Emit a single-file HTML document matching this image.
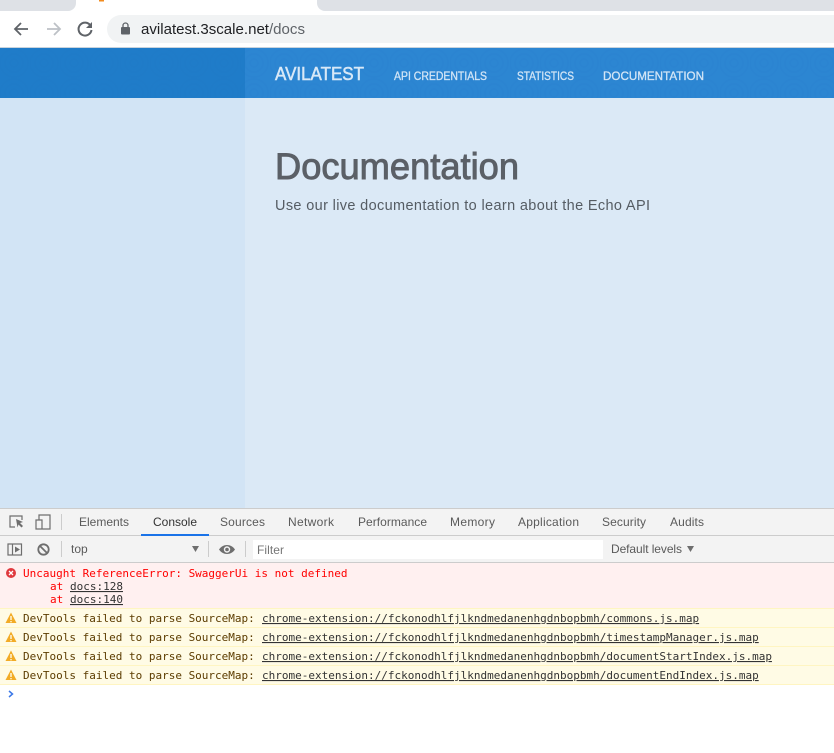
<!DOCTYPE html>
<html lang="en">
<head>
<meta charset="utf-8">
<title>avilatest.3scale.net/docs</title>
<style>
html,body{margin:0;padding:0;width:834px;height:753px;overflow:hidden;background:#fff}
svg{display:block}
.ui{font-family:"Liberation Sans",sans-serif;font-size:12px;fill:#5a5a5a}
.m{font-family:"DejaVu Sans Mono","Liberation Mono",monospace;font-size:11px}
.w{fill:#5c3c00}
.e{fill:#f00}
.l{fill:#333;text-decoration:underline}
.n{font-family:"Liberation Sans",sans-serif;font-size:12px;fill:#d2e5f6;stroke:#d2e5f6;stroke-width:.3px}
</style>
</head>
<body>
<svg width="834" height="753" viewBox="0 0 834 753" xmlns="http://www.w3.org/2000/svg">
<defs>
<pattern id="rings" width="30" height="30" patternUnits="userSpaceOnUse" x="0" y="48">
<g fill="none" stroke="#0f5ea8" stroke-opacity=".035" stroke-width="2">
<circle cx="14" cy="15" r="4"/><circle cx="14" cy="15" r="9"/><circle cx="14" cy="15" r="14"/>
</g>
</pattern>
</defs>

<!-- browser chrome -->
<rect width="834" height="48" fill="#fff"/>
<path d="M0 0H76V3a8 8 0 0 1-8 8H0Z" fill="#dee1e6"/>
<path d="M317 0H834V11H325a8 8 0 0 1-8-8Z" fill="#dee1e6"/>
<rect x="99" y="0" width="5" height="1.500" fill="#f28b1e"/>
<path d="M107 29a14 14 0 0 1 14-14H834V43H121a14 14 0 0 1-14-14Z" fill="#f1f3f4"/>
<path d="M28 29H15M21 23l-6 6 6 6" fill="none" stroke="#5f6368" stroke-width="1.800"/>
<path d="M47 29H60M54 23l6 6-6 6" fill="none" stroke="#bdc1c6" stroke-width="1.800"/>
<path d="M90.500 25.500A6.500 6.500 0 1 0 91.500 30" fill="none" stroke="#5f6368" stroke-width="2"/>
<path d="M92 22v6h-6Z" fill="#5f6368"/>
<rect x="121" y="27" width="9" height="7.500" rx="1" fill="#5f6368"/>
<path d="M123 27.500v-2a2.500 2.500 0 0 1 5 0v2" fill="none" stroke="#5f6368" stroke-width="1.300"/>
<text x="141" y="34" font-family="Liberation Sans,sans-serif" font-size="14.500" fill="#202124" textLength="128" lengthAdjust="spacingAndGlyphs">avilatest.3scale.net</text>
<text x="269" y="34" font-family="Liberation Sans,sans-serif" font-size="14.500" fill="#5f6368" textLength="36" lengthAdjust="spacingAndGlyphs">/docs</text>

<!-- page -->
<rect y="47" width="834" height="1" fill="#c9d3dc"/>
<rect y="48" width="245" height="50" fill="#1f7cc9"/>
<rect x="245" y="48" width="589" height="50" fill="#2c86d2"/>
<rect y="48" width="834" height="50" fill="url(#rings)"/>
<rect y="98" width="245" height="410" fill="#d2e4f5"/>
<rect x="245" y="98" width="589" height="410" fill="#dbe9f6"/>

<text x="275" y="80" font-family="Liberation Sans,sans-serif" font-size="18" fill="#d8e8f7" stroke="#d8e8f7" stroke-width=".5" textLength="89" lengthAdjust="spacingAndGlyphs">AVILATEST</text>
<text class="n" x="394" y="80" textLength="93" lengthAdjust="spacingAndGlyphs">API CREDENTIALS</text>
<text class="n" x="517" y="80" textLength="57" lengthAdjust="spacingAndGlyphs">STATISTICS</text>
<text class="n" x="603" y="80" textLength="101" lengthAdjust="spacingAndGlyphs">DOCUMENTATION</text>

<text x="275" y="179" font-family="Liberation Sans,sans-serif" font-size="37" fill="#5b6067" stroke="#5b6067" stroke-width=".9" textLength="244" lengthAdjust="spacingAndGlyphs">Documentation</text>
<text x="275" y="210" font-family="Liberation Sans,sans-serif" font-size="14.500" fill="#555c63" textLength="375" lengthAdjust="spacing">Use our live documentation to learn about the Echo API</text>

<!-- devtools tab bar -->
<rect y="508" width="834" height="1" fill="#ccc"/>
<rect y="509" width="834" height="26" fill="#f3f3f3"/>
<rect y="535" width="834" height="1" fill="#ccc"/>
<path d="M15 527H10V516H22V520" fill="none" stroke="#6e6e6e" stroke-width="1.200"/>
<path d="M16 519l7 3-3 1 3 3-1.500 1.500-3-3-1 3Z" fill="#6e6e6e"/>
<path d="M39 520V515H50V529H36V520H42V529" fill="none" stroke="#6e6e6e" stroke-width="1.200"/>
<rect x="61" y="514" width="1" height="16" fill="#ccc"/>
<text class="ui" x="79" y="526" textLength="50">Elements</text>
<text class="ui" x="153" y="526" textLength="44" style="fill:#333">Console</text>
<rect x="141" y="534" width="68" height="2" fill="#1a73e8"/>
<text class="ui" x="220" y="526" textLength="45">Sources</text>
<text class="ui" x="288" y="526" textLength="46">Network</text>
<text class="ui" x="358" y="526" textLength="69">Performance</text>
<text class="ui" x="450" y="526" textLength="45">Memory</text>
<text class="ui" x="518" y="526" textLength="61">Application</text>
<text class="ui" x="602" y="526" textLength="44">Security</text>
<text class="ui" x="670" y="526" textLength="34">Audits</text>

<!-- console toolbar -->
<rect y="536" width="834" height="26" fill="#f3f3f3"/>
<rect y="562" width="834" height="1" fill="#ccc"/>
<rect x="8" y="544" width="13.500" height="11" fill="none" stroke="#6e6e6e" stroke-width="1.200"/>
<path d="M12.500 544V555" stroke="#6e6e6e" stroke-width="1.200"/>
<path d="M15 546.500l5 3-5 3Z" fill="#6e6e6e"/>
<circle cx="43.500" cy="549.500" r="5.200" fill="none" stroke="#6e6e6e" stroke-width="1.800"/>
<path d="M39.500 545.500l8 8" stroke="#6e6e6e" stroke-width="1.800"/>
<rect x="61" y="541" width="1" height="16" fill="#ccc"/>
<text class="ui" x="71" y="553">top</text>
<path d="M192 546h7l-3.500 6Z" fill="#6e6e6e"/>
<rect x="208" y="541" width="1" height="16" fill="#ccc"/>
<path d="M219 549.500c2-3 5-4.500 8-4.500s6 1.500 8 4.500c-2 3-5 4.500-8 4.500s-6-1.500-8-4.500Z" fill="#6e6e6e"/>
<circle cx="227" cy="549.500" r="3.200" fill="#f3f3f3"/>
<circle cx="227" cy="549.500" r="1.800" fill="#6e6e6e"/>
<rect x="245" y="541" width="1" height="16" fill="#ccc"/>
<rect x="253" y="540" width="350" height="19" fill="#fff"/>
<text class="ui" x="257" y="554" textLength="27" style="fill:#757575">Filter</text>
<text class="ui" x="611" y="553" textLength="71">Default levels</text>
<path d="M687 546h7l-3.500 6Z" fill="#6e6e6e"/>

<!-- console messages -->
<rect y="563" width="834" height="190" fill="#fff"/>
<rect y="563" width="834" height="45" fill="#fff0f0"/>
<circle cx="11" cy="573" r="5" fill="#e0393e"/>
<path d="M9 571l4 4M13 571l-4 4" stroke="#fff" stroke-width="1.300"/>
<text class="m e" x="23" y="577">Uncaught ReferenceError: SwaggerUi is not defined</text>
<text class="m e" x="50" y="590">at</text>
<text class="m l" x="70" y="590">docs:128</text>
<text class="m e" x="50" y="603">at</text>
<text class="m l" x="70" y="603">docs:140</text>

<rect y="608" width="834" height="76" fill="#fffbe5"/>
<rect y="608" width="834" height="1" fill="#fff5c2"/>
<rect y="627" width="834" height="1" fill="#fff5c2"/>
<rect y="646" width="834" height="1" fill="#fff5c2"/>
<rect y="665" width="834" height="1" fill="#fff5c2"/>
<rect y="684" width="834" height="1" fill="#fff5c2"/>

<g>
<path d="M11 612.500l5.500 10.500h-11Z" fill="#f2ab26"/><rect x="10.300" y="616" width="1.400" height="4" fill="#fffbe5"/><rect x="10.300" y="621" width="1.400" height="1.300" fill="#fffbe5"/>
<path d="M11 631.500l5.500 10.500h-11Z" fill="#f2ab26"/><rect x="10.300" y="635" width="1.400" height="4" fill="#fffbe5"/><rect x="10.300" y="640" width="1.400" height="1.300" fill="#fffbe5"/>
<path d="M11 650.500l5.500 10.500h-11Z" fill="#f2ab26"/><rect x="10.300" y="654" width="1.400" height="4" fill="#fffbe5"/><rect x="10.300" y="659" width="1.400" height="1.300" fill="#fffbe5"/>
<path d="M11 669.500l5.500 10.500h-11Z" fill="#f2ab26"/><rect x="10.300" y="673" width="1.400" height="4" fill="#fffbe5"/><rect x="10.300" y="678" width="1.400" height="1.300" fill="#fffbe5"/>
</g>
<text class="m w" x="23" y="622">DevTools failed to parse SourceMap:</text>
<text class="m l" x="262" y="622">chrome-extension://fckonodhlfjlkndmedanenhgdnbopbmh/commons.js.map</text>
<text class="m w" x="23" y="641">DevTools failed to parse SourceMap:</text>
<text class="m l" x="262" y="641">chrome-extension://fckonodhlfjlkndmedanenhgdnbopbmh/timestampManager.js.map</text>
<text class="m w" x="23" y="660">DevTools failed to parse SourceMap:</text>
<text class="m l" x="262" y="660">chrome-extension://fckonodhlfjlkndmedanenhgdnbopbmh/documentStartIndex.js.map</text>
<text class="m w" x="23" y="679">DevTools failed to parse SourceMap:</text>
<text class="m l" x="262" y="679">chrome-extension://fckonodhlfjlkndmedanenhgdnbopbmh/documentEndIndex.js.map</text>

<path d="M9 691l3.500 3-3.500 3" fill="none" stroke="#3b78e7" stroke-width="1.500"/>
</svg>
</body>
</html>
